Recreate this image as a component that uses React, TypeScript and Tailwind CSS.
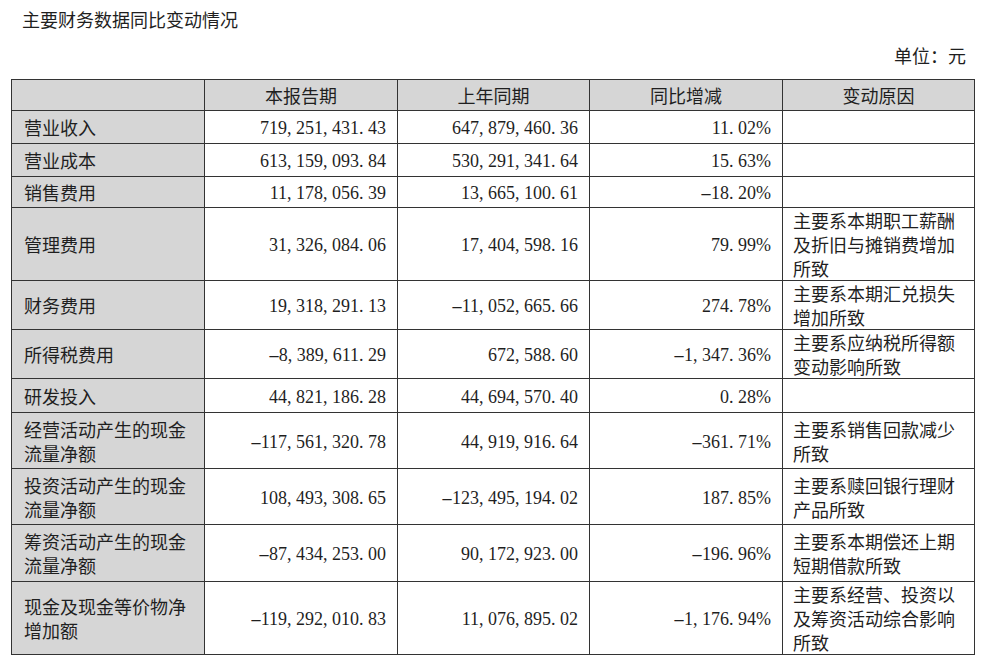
const CJK = '"Noto Sans CJK SC", "Noto Sans", sans-serif'
const NUM = '"Liberation Serif", "Noto Sans CJK SC", serif'

type Row = {
  label: string[]
  current: string
  previous: string
  change: string
  reason: string[]
  h: number
}

const rows: Row[] = [
  { label: ['营业收入'], current: '719,251,431.43', previous: '647,879,460.36', change: '11.02%', reason: [], h: 33 },
  { label: ['营业成本'], current: '613,159,093.84', previous: '530,291,341.64', change: '15.63%', reason: [], h: 33 },
  { label: ['销售费用'], current: '11,178,056.39', previous: '13,665,100.61', change: '-18.20%', reason: [], h: 31 },
  {
    label: ['管理费用'],
    current: '31,326,084.06',
    previous: '17,404,598.16',
    change: '79.99%',
    reason: ['主要系本期职工薪酬', '及折旧与摊销费增加', '所致'],
    h: 73,
  },
  {
    label: ['财务费用'],
    current: '19,318,291.13',
    previous: '-11,052,665.66',
    change: '274.78%',
    reason: ['主要系本期汇兑损失', '增加所致'],
    h: 48,
  },
  {
    label: ['所得税费用'],
    current: '-8,389,611.29',
    previous: '672,588.60',
    change: '-1,347.36%',
    reason: ['主要系应纳税所得额', '变动影响所致'],
    h: 49,
  },
  { label: ['研发投入'], current: '44,821,186.28', previous: '44,694,570.40', change: '0.28%', reason: [], h: 34 },
  {
    label: ['经营活动产生的现金', '流量净额'],
    current: '-117,561,320.78',
    previous: '44,919,916.64',
    change: '-361.71%',
    reason: ['主要系销售回款减少', '所致'],
    h: 56,
  },
  {
    label: ['投资活动产生的现金', '流量净额'],
    current: '108,493,308.65',
    previous: '-123,495,194.02',
    change: '187.85%',
    reason: ['主要系赎回银行理财', '产品所致'],
    h: 56,
  },
  {
    label: ['筹资活动产生的现金', '流量净额'],
    current: '-87,434,253.00',
    previous: '90,172,923.00',
    change: '-196.96%',
    reason: ['主要系本期偿还上期', '短期借款所致'],
    h: 57,
  },
  {
    label: ['现金及现金等价物净', '增加额'],
    current: '-119,292,010.83',
    previous: '11,076,895.02',
    change: '-1,176.94%',
    reason: ['主要系经营、投资以', '及筹资活动综合影响', '所致'],
    h: 72,
  },
]

// punctuation in the source font takes a full half-width cell
function Num({ value }: { value: string }) {
  return (
    <span style={{ fontFamily: NUM }}>
      {value.split('').map((ch, i) => {
        if (ch === '-')
          return (
            <span key={i} className="inline-block w-[10px] text-center">
              <span className="inline-block scale-x-[2]">{ch}</span>
            </span>
          )
        if (ch === ',' || ch === '.')
          return (
            <span key={i} className="inline-block w-[9px] text-left">
              {ch}
            </span>
          )
        return <span key={i}>{ch}</span>
      })}
    </span>
  )
}

function Lines({ lines }: { lines: string[] }) {
  return (
    <>
      {lines.map((l) => (
        <span key={l} className="block whitespace-nowrap">
          {l}
        </span>
      ))}
    </>
  )
}

const cell = 'border border-[#333] align-middle p-0'

export default function App() {
  return (
    <div className="w-[981px] h-[666px] bg-white text-[#1f1f1f] text-[18px] leading-[24px]" style={{ fontFamily: CJK }}>
      <div className="pl-[22px] pt-[7px] h-[43px]">主要财务数据同比变动情况</div>
      <div className="flex justify-end pr-[15px] h-[36px]">单位：元</div>
      <table className="ml-[11px] w-[963px] border-collapse table-fixed">
        <colgroup>
          <col className="w-[193px]" />
          <col className="w-[193px]" />
          <col className="w-[192px]" />
          <col className="w-[193px]" />
          <col className="w-[192px]" />
        </colgroup>
        <thead>
          <tr className="h-[31px] bg-[#d6d6d6]">
            <th className={cell}></th>
            <th className={`${cell} font-normal text-center`}>本报告期</th>
            <th className={`${cell} font-normal text-center`}>上年同期</th>
            <th className={`${cell} font-normal text-center`}>同比增减</th>
            <th className={`${cell} font-normal text-center`}>变动原因</th>
          </tr>
        </thead>
        <tbody>
          {rows.map((r) => (
            <tr key={r.label.join('')} style={{ height: r.h }}>
              <td className={`${cell} bg-[#d6d6d6] pl-[12px] text-left`}>
                <Lines lines={r.label} />
              </td>
              <td className={`${cell} pr-[11px] text-right`}>
                <Num value={r.current} />
              </td>
              <td className={`${cell} pr-[11px] text-right`}>
                <Num value={r.previous} />
              </td>
              <td className={`${cell} pr-[11px] text-right`}>
                <Num value={r.change} />
              </td>
              <td className={`${cell} pl-[10px] text-left`}>
                <Lines lines={r.reason} />
              </td>
            </tr>
          ))}
        </tbody>
      </table>
    </div>
  )
}
